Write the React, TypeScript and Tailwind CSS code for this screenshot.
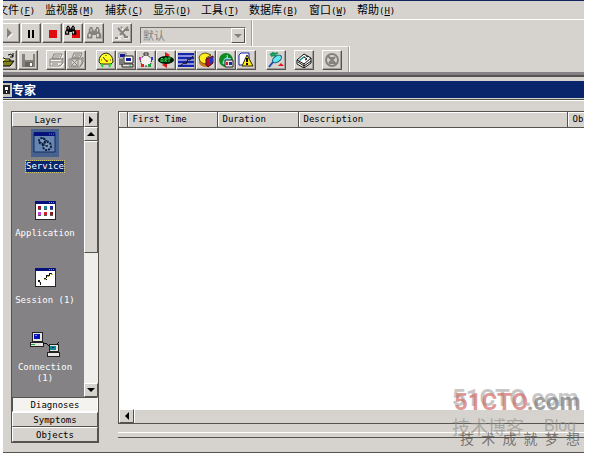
import type { ReactNode } from 'react';
import clsx from 'clsx';

const raised = 'border border-t-white border-l-white border-r-[#55534f] border-b-[#55534f] bg-[#d6d3ce]';

const menus = [
  { label: '文件', hotkey: 'F', width: 'w-12' },
  { label: '监视器', hotkey: 'M', width: 'w-15' },
  { label: '捕获', hotkey: 'C', width: 'w-12' },
  { label: '显示', hotkey: 'D', width: 'w-12' },
  { label: '工具', hotkey: 'T', width: 'w-12' },
  { label: '数据库', hotkey: 'B', width: 'w-15' },
  { label: '窗口', hotkey: 'W', width: 'w-12' },
  { label: '帮助', hotkey: 'H', width: 'w-12' },
];

function Glyph({ children, size = 'size-4' }: { children: ReactNode; size?: string }) {
  return (
    <svg viewBox="0 0 16 16" className={clsx('block shrink-0', size)} fill="none" aria-hidden="true">
      {children}
    </svg>
  );
}

function Binoculars({ color }: { color: string }) {
  return (
    <g fill={color}>
      <path d="M3 1h3v2H3zM10 1h3v2h-3zM2 3h5v2h2V3h5v3l2 4v4h-6v-4H6v4H0v-4l2-4z" />
      <path d="M2 9h2v3H2zM11 9h2v3h-2zM4 3h1v3H4zM11 3h1v3h-1z" fill="#e8e6e2" />
    </g>
  );
}

const captureTools = [
  { name: 'Start', icon: <Glyph><path d="M6 4v10l5-5z" fill="#fff" /><path d="M5 3v10l5-5z" fill="#85827d" /></Glyph> },
  { name: 'Pause', icon: <Glyph><path d="M5 5h2v8H5zM9 5h2v8H9z" fill="#000" /></Glyph> },
  { name: 'Stop', icon: <Glyph><path d="M5 5h8v8H5z" fill="#e00a10" /></Glyph> },
  {
    name: 'Stop and display',
    icon: (
      <Glyph>
        <path d="M7 5h8v8H7z" fill="#e00a10" />
        <g transform="scale(.7)"><Binoculars color="#000" /></g>
      </Glyph>
    ),
  },
  { name: 'Display', icon: <Glyph><g transform="translate(1 1) scale(.9)"><Binoculars color="#85827d" /></g></Glyph> },
];

const fileTools = [
  {
    name: 'Open',
    icon: (
      <Glyph>
        <path d="M0 6h5l1 1h5v3H5l-4 4H0z" fill="#ffff63" stroke="#000" />
        <path d="M1 14l4-5h10l-4 5z" fill="#84821f" stroke="#000" />
        <path d="M9 3q3-2 5 1M14 1v4h-3" stroke="#000" />
      </Glyph>
    ),
  },
  {
    name: 'Save',
    icon: (
      <Glyph>
        <path d="M2 2h13v13H2z" fill="#85827d" />
        <path d="M5 2h8v6H5z" fill="#d6d3ce" />
        <path d="M5 10h8v5H5z" fill="#696762" />
        <path d="M10 11h2v3h-2z" fill="#fff" />
      </Glyph>
    ),
  },
];

const printTools = [
  {
    name: 'Print',
    icon: (
      <Glyph>
        <path d="M6 2h8l-2 5H4zM2 7h12v5l-2 2H2zM2 10h11M13 8l2-2v5l-3 3M6 4h6M5 6h6M4 12h6" stroke="#fff" transform="translate(1 1)" />
        <path d="M6 2h8l-2 5H4zM2 7h12v5l-2 2H2zM2 10h11M13 8l2-2v5l-3 3M6 4h6M5 6h6M4 12h6" stroke="#85827d" />
      </Glyph>
    ),
  },
  {
    name: 'Print preview',
    icon: (
      <Glyph>
        <path d="M6 1h8l-2 5H4zM1 7h13v5l-2 3H1zM13 7l2-2v5l-3 4M7 3h5M6 5h5" stroke="#85827d" />
        <path d="M3 7h7v7H3z" fill="#d6d3ce" stroke="#85827d" />
        <path d="M4 8l5 5M9 8l-5 5" stroke="#85827d" />
      </Glyph>
    ),
  },
];

const viewTools = [
  {
    name: 'Dashboard',
    icon: (
      <Glyph>
        <path d="M1 10q0-8 7-9 7 1 7 9l-2 2H3z" fill="#ffff21" stroke="#2b2a10" />
        <path d="M5 5l4 5M8 3v1M3 8h1M12 8h1" stroke="#333" />
        <circle cx="9" cy="9" r="1" fill="#e02020" />
        <path d="M3 12l2 3M13 12l-2 3" stroke="#21dc21" strokeWidth="2" />
      </Glyph>
    ),
  },
  {
    name: 'Host table',
    icon: (
      <Glyph>
        <path d="M1 1h7v5H1z" fill="#fff" stroke="#777" />
        <path d="M2 2h5v3H2z" fill="#101898" />
        <path d="M6 4h9v7H6z" fill="#fff" stroke="#222" />
        <path d="M8 6h5v3H8z" fill="#101898" />
        <path d="M1 8h4M1 10h4M1 12h3" stroke="#222" />
        <path d="M4 12h11v3H4z" fill="#e8e6e2" stroke="#222" />
        <path d="M11 14h2" stroke="#149a36" />
      </Glyph>
    ),
  },
  {
    name: 'Matrix',
    icon: (
      <Glyph>
        <path d="M8 2l6 5-2 7H4L2 7z" fill="#f4f3f0" stroke="#222" strokeDasharray="2 1" />
        <path d="M6 1h4v2H6z" fill="#fff" stroke="#222" />
        <path d="M1 5h2v3H1z" fill="#d42cc4" />
        <path d="M13 5h2v3h-2z" fill="#2038d0" />
        <path d="M3 12h3v3H3z" fill="#e02020" />
        <path d="M10 12h3v3h-3z" fill="#18a838" />
      </Glyph>
    ),
  },
  {
    name: 'Application response time',
    icon: (
      <Glyph>
        <path d="M7 0l5 3-5 3zM9 16l-5-3 5-3z" fill="#e01818" />
        <ellipse cx="8" cy="8" rx="8" ry="4" fill="#051b08" />
        <path d="M3 10V7l1-1 1 1v3M3 9h2M7 10V6h2v2H7l2 2M10 6h3M11 6v4" stroke="#25d544" />
      </Glyph>
    ),
  },
  {
    name: 'History samples',
    icon: (
      <Glyph>
        <path d="M0 1h16v14H0z" fill="#1722ad" />
        <path d="M0 4h16M0 8h16M0 12h16" stroke="#fff" />
        <path d="M2 14l4-3 2 1 2-5 2 1 3-4" stroke="#111" />
      </Glyph>
    ),
  },
  {
    name: 'Protocol distribution',
    icon: (
      <Glyph>
        <path d="M1 7v4q2 4 7 4l5-2V8z" fill="#d87516" />
        <path d="M1 6q1-5 7-5l5 2-5 3 5 3-4 3Q2 12 1 6z" fill="#ffec21" stroke="#63520c" />
        <path d="M8 7l7-3v7l-5 4-2-2z" fill="#b70e28" stroke="#4d0b17" />
        <path d="M12 6l3-1v5l-3 2z" fill="#2634c3" />
      </Glyph>
    ),
  },
  {
    name: 'Global statistics',
    icon: (
      <Glyph>
        <circle cx="8" cy="8" r="6" fill="#7fdfe0" stroke="#128a23" strokeWidth="2" />
        <path d="M3 4l5-2 1 3-3 2-2 5-2-4zM10 2l4 4-4 0z" fill="#128a23" />
        <path d="M7 8h8v7H7z" fill="#e8e6e2" stroke="#222" />
        <path d="M8 10h2v3H8z" fill="#da1818" />
        <path d="M11 10h3v3h-3z" fill="#1722ad" />
      </Glyph>
    ),
  },
  {
    name: 'Alarm log',
    icon: (
      <Glyph>
        <path d="M3 1h8v12H1V3z" fill="#fff" stroke="#1722ad" />
        <path d="M9 3l6 11H4z" fill="#ffe916" stroke="#302a06" />
        <path d="M9 6v4M9 11v2" stroke="#000" strokeWidth="2" />
      </Glyph>
    ),
  },
];

const addressIcon = (
  <Glyph>
    <path d="M2 3l3-2 2 1 3-1M3 4l3-1 3 2" stroke="#19965c" strokeWidth="2" />
    <ellipse cx="9" cy="7" rx="5" ry="3" transform="rotate(-35 9 7)" fill="#62e8ee" stroke="#0e586f" />
    <path d="M5 10l-4 5" stroke="#1749ae" strokeWidth="2" />
    <path d="M10 14l3-3 3 3z" fill="#df1822" />
  </Glyph>
);

const bookIcon = (
  <Glyph>
    <path d="M1 8l7-6 7 4v5l-7 5-7-4z" fill="#fff" stroke="#111" />
    <path d="M1 8l7 4 7-6M8 12v4M2 10l6 4 7-5" stroke="#111" />
    <path d="M3 8l5-4 1 1-5 4z" fill="#118b85" />
    <path d="M8 5l3 2-2 1M10 4l2 1" stroke="#111" />
  </Glyph>
);

const cancelIcon = (
  <Glyph>
    <circle cx="8" cy="8" r="6" stroke="#85827d" strokeWidth="2" />
    <path d="M4 4l8 8M5 6h6M11 5l-6 6M5 11h6" stroke="#85827d" strokeWidth="2" />
  </Glyph>
);

const defineIcon = (
  <Glyph>
    <path d="M4 3l8 9M13 2l-7 8-5 3h5M7 2l1 2M9 12h5" stroke="#fff" transform="translate(1 1)" />
    <path d="M4 3l8 9M14 2l-8 8M7 2l1 1M12 5h3M10 12h4M1 13h3" stroke="#85827d" strokeWidth="2" />
  </Glyph>
);

function AppWindow({ children }: { children: ReactNode }) {
  return (
    <svg viewBox="0 0 21 19" className="h-[19px] w-[21px]" shapeRendering="crispEdges" aria-hidden="true">
      <path d="M0 0h21v19H0z" fill="#262626" />
      <path d="M1 3h19v15H1z" fill="#fff" />
      <path d="M0 0h20v3H0z" fill="#05127c" />
      <path d="M14 1h1v1h-1zM16 1h1v1h-1zM18 1h1v1h-1z" fill="#8b8ba8" />
      {children}
    </svg>
  );
}

const serviceIcon = (
  <svg viewBox="0 0 28 28" className="size-7 bg-[#47618f]" aria-hidden="true">
    <path d="M3 4h21v19H3z" fill="#6886b2" stroke="#152b59" />
    <path d="M3 3h21v4H3z" fill="#05127c" />
    <path d="M18 5h5" stroke="#6f86b9" strokeDasharray="1 1" />
    <circle cx="11" cy="12" r="3" fill="#8199b9" stroke="#0a1f44" strokeWidth="2" strokeDasharray="2 1" />
    <circle cx="16" cy="17" r="4" fill="#8199b9" stroke="#0a1f44" strokeWidth="2" strokeDasharray="2 1" />
    <circle cx="16" cy="17" r="1" fill="#0a1f44" />
    <path d="M8 12l7 5M11 9l7 4" stroke="#0a1f44" />
  </svg>
);

const applicationIcon = (
  <AppWindow>
    <path d="M3 5h3v3H3z" fill="#a11529" />
    <path d="M9 5h3v3H9z" fill="#1b8a92" />
    <path d="M15 5h3v3h-3z" fill="#1c2a9b" />
    <path d="M3 11h3v3H3z" fill="#d23bd0" />
    <path d="M9 11h3v3H9z" fill="#d11c2c" />
    <path d="M15 11h3v3h-3z" fill="#8b1a1a" />
    <path d="M3 8h3v1H3zM9 8h3v1H9zM15 8h3v1h-3zM3 14h3v1H3zM9 14h3v1H9zM15 14h3v1h-3z" fill="#555" />
  </AppWindow>
);

const sessionIcon = (
  <AppWindow>
    <path d="M3 12h2v2H3zM5 14h1v3H5zM9 12h3v-2H9zM11 7h1v4h-1zM11 7h4v1h-4zM14 5h1v3h-1zM15 5h2v1h-2z" fill="#111" />
    <path d="M4 14h1v1H4zM9 11h2v1H9zM12 8h2v1h-2zM16 6h2v1h-2z" fill="#b9bd28" />
  </AppWindow>
);

const connectionIcon = (
  <svg viewBox="0 0 30 26" className="h-[26px] w-[30px]" shapeRendering="crispEdges" aria-hidden="true">
    <path d="M2 1h10v9H2zM0 11h13v4H0z" fill="#e8e6e2" stroke="#222" />
    <path d="M4 3h6v5H4z" fill="#0713b5" />
    <path d="M5 4h2v1H5z" fill="#7a8af0" />
    <path d="M13 12h3l2 2h8l3-3" stroke="#111" fill="none" />
    <path d="M1 13h4v1H1z" fill="#18a838" />
    <path d="M19 13h9v7h-9zM17 21h12v4H17z" fill="#e8e6e2" stroke="#222" />
    <path d="M20 15h6v4h-6z" fill="#118b85" />
    <path d="M22 16h2v1h-2z" fill="#0713b5" />
  </svg>
);

const layers = [
  { name: 'Service', icon: serviceIcon, selected: true },
  { name: 'Application', icon: applicationIcon },
  { name: 'Session (1)', icon: sessionIcon },
  { name: 'Connection (1)', icon: connectionIcon },
];

const columns = [
  { name: '', width: 'w-2' },
  { name: 'First Time', width: 'w-[90px]' },
  { name: 'Duration', width: 'w-[81px]' },
  { name: 'Description', width: '' },
  { name: 'Ob', width: 'w-[17px]' },
];

function ToolButton({ name, children, disabled }: { name: string; children: ReactNode; disabled?: boolean }) {
  return (
    <button aria-label={name} disabled={disabled} className={clsx('flex size-5 shrink-0 items-center justify-center shadow-[inset_-1px_-1px_0_#a19e99]', raised)}>
      {children}
    </button>
  );
}

function Arrow({ dir, className = 'size-2' }: { dir: 'up' | 'down' | 'left' | 'right'; className?: string }) {
  const paths = {
    up: 'M0 6h8L4 2z',
    down: 'M0 2h8L4 6z',
    left: 'M6 0v8L2 4z',
    right: 'M2 0v8l4-4z',
  };
  return (
    <svg viewBox="0 0 8 8" className={className} aria-hidden="true">
      <path d={paths[dir]} fill="currentColor" />
    </svg>
  );
}

function MenuBar() {
  return (
    <nav className="-ml-1.5 flex h-[18px] items-center font-['Noto_Sans_CJK_SC',sans-serif] text-[11px] leading-4">
      {menus.map(menu => (
        <button key={menu.hotkey} className={clsx('shrink-0 text-left whitespace-nowrap', menu.width)}>
          {menu.label}
          <span className="font-['DejaVu_Sans_Mono',monospace] text-[9px]">
            (<u>{menu.hotkey}</u>)
          </span>
        </button>
      ))}
    </nav>
  );
}

function Toolbars() {
  return (
    <div className="border-t border-white">
      <div className="flex h-[26px] w-[249px] items-start border-r border-[#a19e99] pt-[3px] shadow-[1px_0_0_#fff]">
        <div className="-ml-[3px] flex gap-px">
          {captureTools.map(tool => (
            <ToolButton key={tool.name} name={tool.name}>{tool.icon}</ToolButton>
          ))}
        </div>
        <div className="ml-2 flex">
          <ToolButton name="Define filter" disabled>{defineIcon}</ToolButton>
        </div>
        <div className="relative mt-1 ml-2 h-[17px] w-[106px]">
          <select
            aria-label="Filter"
            disabled
            className="block h-[17px] w-full appearance-none border border-t-[#706e69] border-r-white border-b-white border-l-[#706e69] bg-[#d6d3ce] pl-0.5 font-['Noto_Sans_CJK_SC',sans-serif] text-[11px] leading-[15px] text-[#85827d] opacity-100"
          >
            <option>默认</option>
          </select>
          <span className={clsx('pointer-events-none absolute top-px right-px flex h-[15px] w-3.5 items-center justify-center text-[#85827d]', raised)}>
            <Arrow dir="down" />
          </span>
        </div>
      </div>
      <div className="flex h-[26px] w-[346px] items-start border-t border-r border-t-[#f4f3f0] border-r-[#a19e99] pt-[3px] shadow-[1px_0_0_#fff]">
        <div className="-ml-1.5 flex gap-px">
          {fileTools.map(tool => (
            <ToolButton key={tool.name} name={tool.name}>{tool.icon}</ToolButton>
          ))}
        </div>
        <div className="ml-2 flex">
          {printTools.map(tool => (
            <ToolButton key={tool.name} name={tool.name} disabled>{tool.icon}</ToolButton>
          ))}
        </div>
        <div className="ml-2.5 flex">
          {viewTools.map(tool => (
            <ToolButton key={tool.name} name={tool.name}>{tool.icon}</ToolButton>
          ))}
        </div>
        <div className="ml-2.5 flex gap-2">
          <ToolButton name="Address book">{addressIcon}</ToolButton>
          <ToolButton name="Expert help">{bookIcon}</ToolButton>
          <ToolButton name="Cancel" disabled>{cancelIcon}</ToolButton>
        </div>
      </div>
    </div>
  );
}

function LayerPanel() {
  return (
    <aside className="flex w-[88px] shrink-0 flex-col border border-[#55534f]">
      <div className="flex h-[15px]">
        <button className={clsx('flex-1 text-center leading-3', raised)}>Layer</button>
        <button aria-label="Next view" className={clsx('flex w-3.5 items-center justify-center', raised)}>
          <Arrow dir="right" />
        </button>
      </div>
      <div className="flex min-h-0 flex-1">
        <ul className="flex-1 bg-[#848284] pt-0.5 pr-1.5 text-white">
          {layers.map(layer => (
            <li key={layer.name} className="flex h-[67px] flex-col items-center">
              <div className="flex h-7 items-center">{layer.icon}</div>
              <span
                className={clsx(
                  'mt-1 text-center leading-[11px]',
                  layer.selected && 'bg-[#08246b] outline-1 outline-dotted outline-[#c9c36a]',
                )}
              >
                {layer.name}
              </span>
            </li>
          ))}
        </ul>
        <div className="flex w-3.5 flex-col bg-[#efeeeb]">
          <button aria-label="Scroll up" className={clsx('flex h-3.5 items-center justify-center', raised)}>
            <Arrow dir="up" />
          </button>
          <div className={clsx('h-[112px]', raised)} />
          <button aria-label="Scroll down" className={clsx('mt-auto flex h-3.5 items-center justify-center', raised)}>
            <Arrow dir="down" />
          </button>
        </div>
      </div>
      <button className="h-[15px] border border-t-[#55534f] border-r-white border-b-white border-l-[#55534f] bg-[#f4f3f0] leading-3">Diagnoses</button>
      <button className={clsx('h-[15px] leading-3', raised)}>Symptoms</button>
      <button className={clsx('h-[15px] leading-3', raised)}>Objects</button>
    </aside>
  );
}

function ExpertTable() {
  return (
    <section className="flex min-w-0 flex-1 flex-col">
      <div className="flex flex-1 flex-col border border-r-0 border-[#55534f] bg-white">
        <table className="w-full table-fixed border-collapse">
          <thead>
            <tr className="h-[15px]">
              {columns.map(col => (
                <th
                  key={col.name}
                  className={clsx(
                    'overflow-hidden border-r border-b border-[#55534f] bg-[#d6d3ce] p-0 text-left font-normal whitespace-nowrap last:border-r-0',
                    col.width,
                  )}
                >
                  <div className={clsx('h-3.5 border-t border-l border-white leading-[13px]', col.name && 'pl-1')}>{col.name}</div>
                </th>
              ))}
            </tr>
          </thead>
        </table>
        <div className="mt-auto flex h-3.5 bg-[#d6d3ce]">
          <button aria-label="Scroll left" className={clsx('flex w-[15px] items-center justify-center', raised)}>
            <Arrow dir="left" />
          </button>
          <div className="flex-1 border-t border-l border-white" />
        </div>
      </div>
      <div className="mt-2 h-1.5 border-t border-b border-t-white border-b-[#55534f]" />
    </section>
  );
}

function Watermark() {
  return (
    <div className="pointer-events-none absolute right-0 bottom-1.5 w-[132px] whitespace-nowrap select-none">
      <div className="pl-0.5 font-['Roboto','Liberation_Sans',sans-serif] text-[24px] leading-8 font-bold text-[#cf6a66]/70 [text-shadow:-2px_-4px_0_#8f8f8f80]">
        51CTO<span className="text-[#777]/70">.com</span>
      </div>
      <div className="flex justify-between pr-2 font-['Noto_Sans_CJK_SC',sans-serif] text-[18px] leading-4 text-[#8b8985]/60">
        <span>技术博客</span>
        <span className="font-['Liberation_Sans',sans-serif] text-[16px]">Blog</span>
      </div>
      <div className="-mt-1 flex justify-between pr-1 pl-2 font-['Noto_Sans_CJK_SC',sans-serif] text-[14px] leading-4 text-[#5d5b58]/80">
        {[...'技术成就梦想'].map(char => (
          <span key={char}>{char}</span>
        ))}
      </div>
    </div>
  );
}

export default function App() {
  return (
    <div className="flex min-h-screen flex-col bg-white pr-[5px] pl-[3px] font-['DejaVu_Sans_Mono',monospace] text-[9px] text-black">
      <div className="relative flex flex-1 flex-col overflow-hidden border-t border-b border-t-[#10245f] border-b-[#55534f] bg-[#d6d3ce]">
        <MenuBar />
        <Toolbars />
        <div className="h-[5px] border-b-2 border-[#55534f] bg-[#848284]" />
        <header className="mt-1 flex h-[17px] items-center bg-[#08246b] font-['Noto_Sans_CJK_SC',sans-serif] text-xs font-bold text-white">
          <svg viewBox="0 0 9 14" className="h-3.5 w-[9px]" aria-hidden="true">
            <path d="M0 0h9v14H0z" fill="#c7c4be" />
            <path d="M0 2h7v9H0z" fill="#222" />
            <path d="M2 4h3v3H2zM3 8h1v2H3z" fill="#fff" />
          </svg>
          <h1>专家</h1>
        </header>
        <div className="h-0.5 border-b border-[#4b5545]" />
        <main className="flex flex-1 gap-[19px] border-t border-white pt-2.5 pl-2">
          <div className="flex pb-[9px]">
            <LayerPanel />
          </div>
          <div className="flex min-w-0 flex-1 pb-3.5">
            <ExpertTable />
          </div>
        </main>
        <Watermark />
      </div>
    </div>
  );
}
